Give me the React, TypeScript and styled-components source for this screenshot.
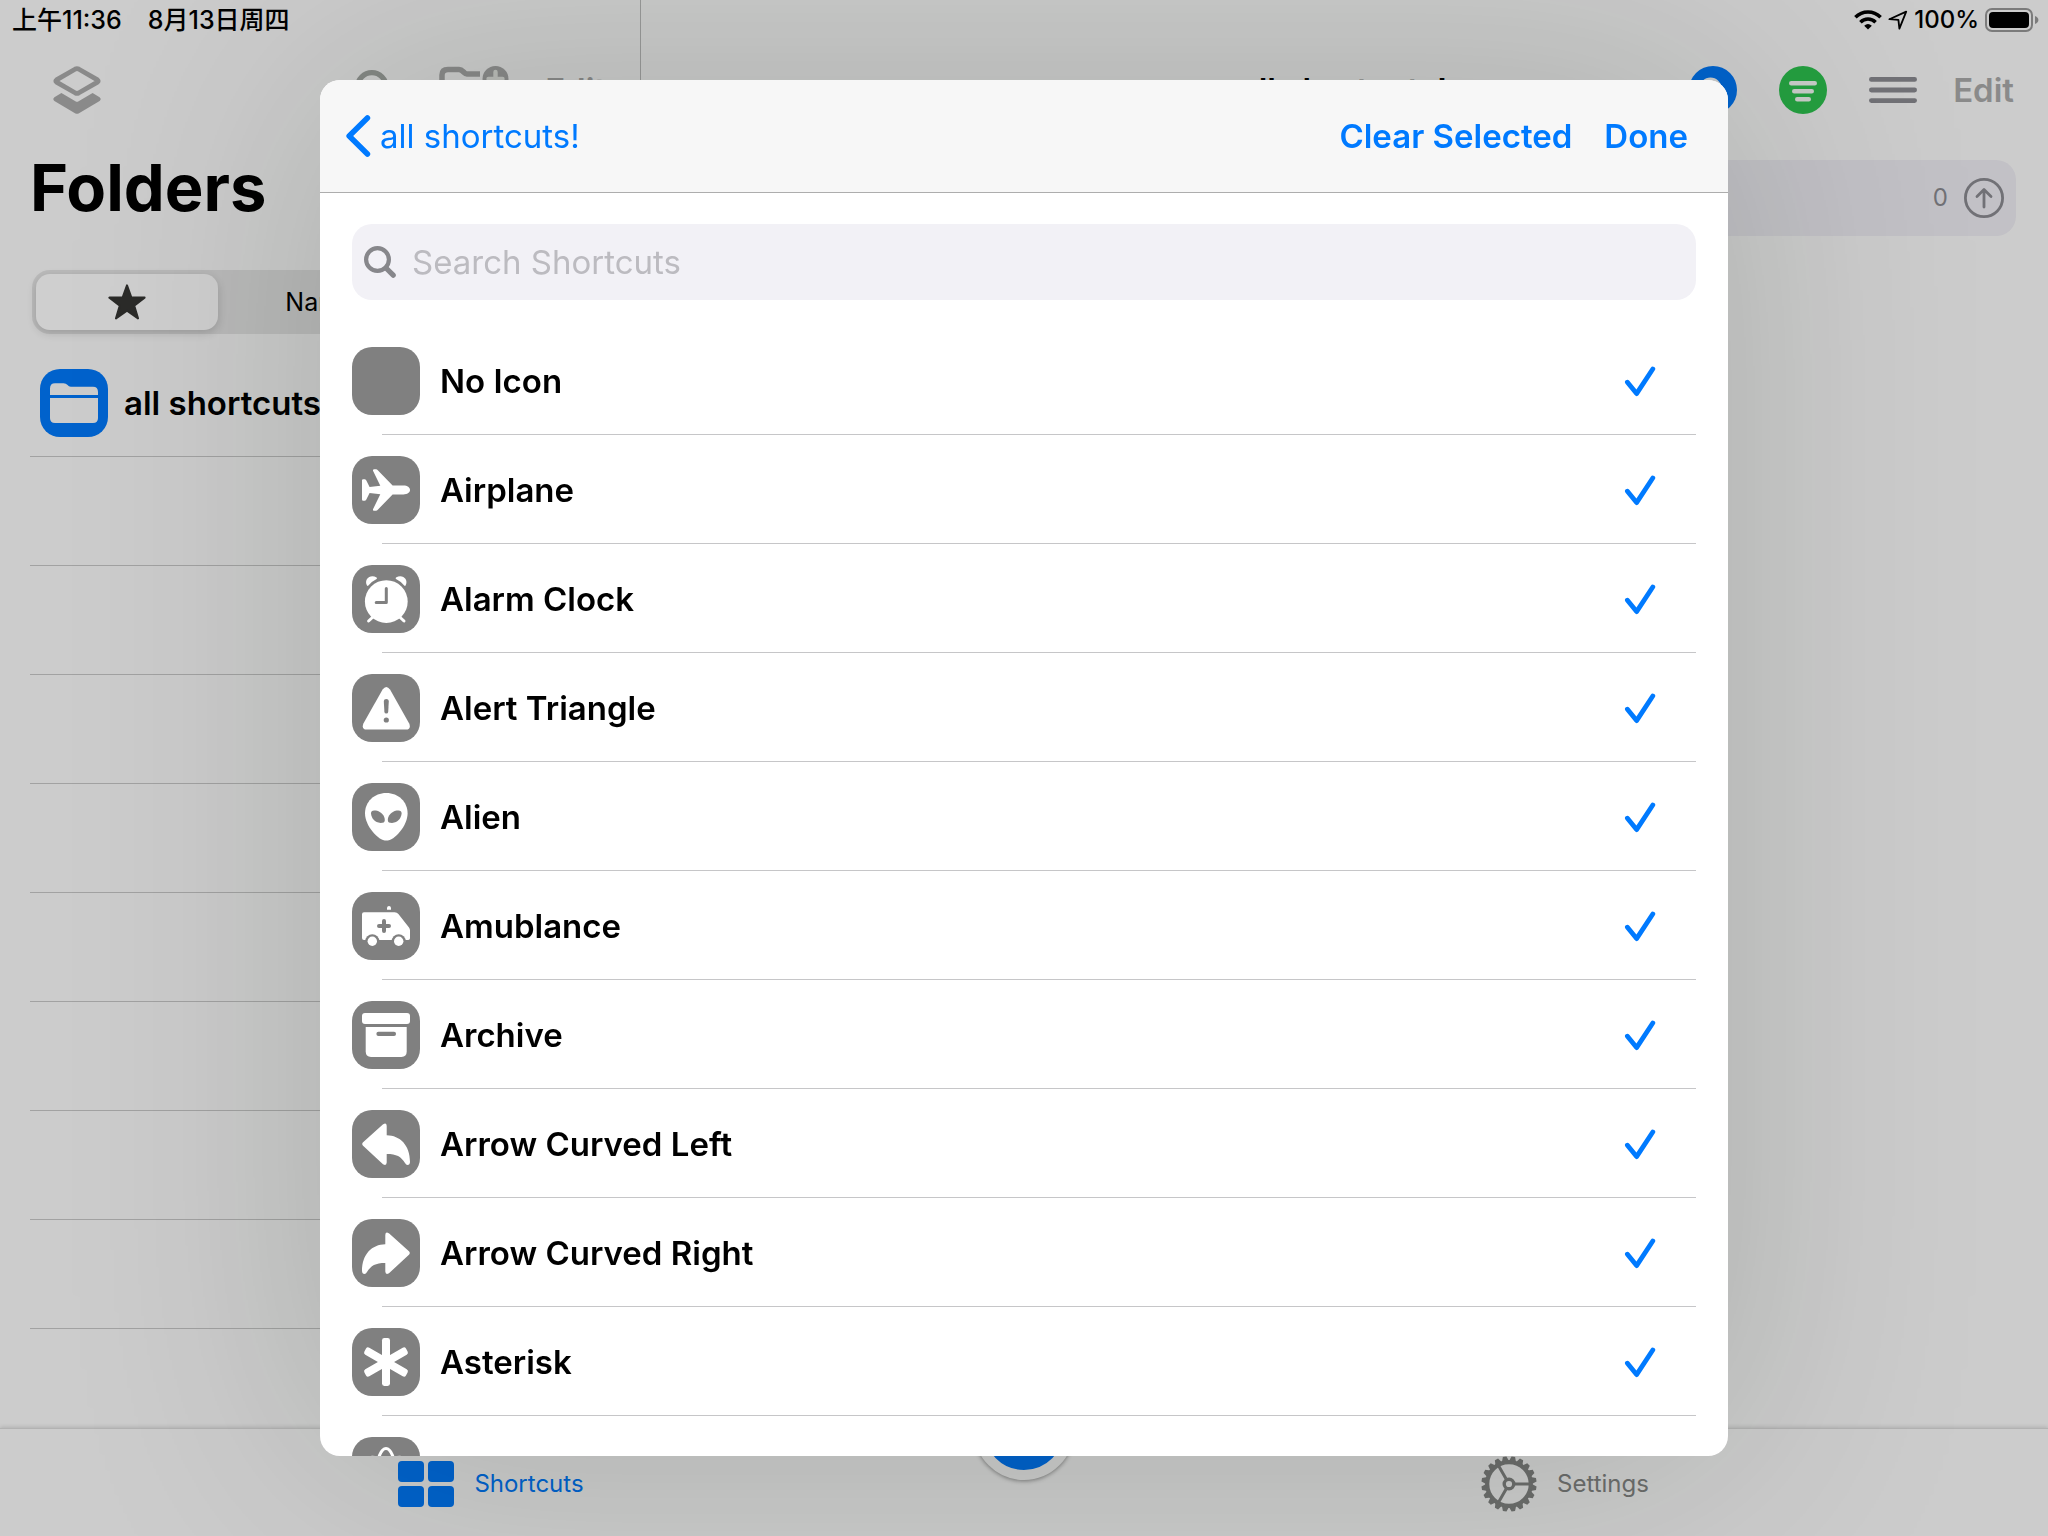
import React, { useState } from "react";
import styled, { createGlobalStyle, css } from "styled-components";

const GlobalStyle = createGlobalStyle`
  *, *::before, *::after { box-sizing: border-box; }
  body {
    margin: 0;
    background: #cccccc;
    color: #000;
    font-family: Inter, "Noto Sans CJK SC", "Liberation Sans", sans-serif;
    font-size: 33px;
    line-height: 40px;
  }
  h1, h2, ul { margin: 0; padding: 0; font-size: inherit; font-weight: inherit; }
  button, input { font: inherit; color: inherit; }
  svg { display: block; flex: none; }
`;

const BLUE = "#007aff";
const DIM_BLUE = "#0062cc";
const TILE_GRAY = "#808080";

/* ---------- page frame ---------- */

const Screen = styled.div`
  display: flex;
  flex-direction: column;
  height: 100vh;
  overflow: hidden;
  background: #cccccc;
`;

const Panes = styled.div`
  display: flex;
  flex: 1;
  min-height: 0;
`;

const Sidebar = styled.aside`
  flex: 0 0 641px;
  display: flex;
  flex-direction: column;
  border-right: 1px solid #9a9a9a;
`;

const MainPane = styled.main`
  flex: 1;
  min-width: 0;
`;

const StatusStrip = styled.div<{ $end?: boolean }>`
  display: flex;
  align-items: center;
  justify-content: ${(p) => (p.$end ? "flex-end" : "flex-start")};
  gap: ${(p) => (p.$end ? "6px" : "26px")};
  height: 40px;
  padding: 0 9px 0 12px;
  font-size: ${(p) => (p.$end ? "24px" : "25px")};
  line-height: 40px;
  font-weight: 500;
  white-space: nowrap;
`;

const IconButton = styled.button<{ $spaced?: boolean }>`
  display: flex;
  padding: 0;
  margin-right: ${(p) => (p.$spaced ? "8px" : "0")};
  border: 0;
  background: none;
  color: #8a8a8a;
`;

const TextButton = styled.button<{ $tone?: "blue" | "gray"; $regular?: boolean }>`
  display: flex;
  align-items: center;
  gap: 8px;
  padding: 0;
  border: 0;
  background: none;
  white-space: nowrap;
  font-weight: ${(p) => (p.$regular ? 400 : 600)};
  color: ${(p) => (p.$tone === "gray" ? "#8a8a8a" : BLUE)};
`;

const SidebarToolbar = styled.div`
  display: flex;
  align-items: center;
  gap: 36px;
  height: 100px;
  padding: 0 34px 0 53px;
`;

const Spacer = styled.span`
  flex: 1;
`;

const FoldersTitle = styled.h1`
  margin-top: 8px;
  padding-left: 30px;
  font-size: 65px;
  line-height: 80px;
  font-weight: 700;
`;

const Segments = styled.div`
  display: grid;
  grid-template-columns: 182px 204px 1fr;
  height: 64px;
  margin: 42px 32px 14px;
  padding: 4px;
  border-radius: 18px;
  background: #bababa;
`;

const Segment = styled.button<{ $active?: boolean }>`
  display: flex;
  align-items: center;
  justify-content: center;
  padding: 0;
  border: 0;
  border-radius: 14px;
  background: none;
  font-size: 25px;
  color: #000;
  ${(p) =>
    p.$active &&
    css`
      background: #cfcfcf;
      box-shadow: 0 3px 10px rgba(0, 0, 0, 0.16);
    `}
`;

const PlainList = styled.ul<{ $inset?: boolean }>`
  list-style: none;
  padding-left: ${(p) => (p.$inset ? "30px" : "0")};
`;

const FolderRow = styled.li`
  height: 109px;
  border-bottom: 1px solid #a2a2a2;
`;

const FolderLink = styled.a`
  display: flex;
  align-items: center;
  gap: 16px;
  height: 108px;
  padding: 2px 0 0 10px;
  color: #000;
  font-weight: 600;
  text-decoration: none;
  white-space: nowrap;
`;

const Tile = styled.span<{ $color: string }>`
  flex: none;
  display: block;
  width: 68px;
  height: 68px;
  border-radius: 20px;
  background: ${(p) => p.$color};
  color: ${(p) => p.$color};
`;

const MainToolbar = styled.div`
  display: grid;
  grid-template-columns: 1fr auto 1fr;
  align-items: center;
  height: 100px;
  padding: 0 34px 0 32px;
`;

const MainTitle = styled.h2`
  grid-column: 2;
  font-weight: 600;
`;

const ToolGroup = styled.div<{ $gap: number }>`
  display: flex;
  align-items: center;
  justify-content: flex-end;
  gap: ${(p) => p.$gap}px;
`;

const SearchField = styled.div<{ $dim?: boolean }>`
  display: flex;
  align-items: center;
  gap: 16px;
  height: 76px;
  border-radius: 20px;
  padding: 0 12px;
  margin: ${(p) => (p.$dim ? "20px 32px 0" : "0 0 26px")};
  background: ${(p) => (p.$dim ? "#c2c1c6" : "#f2f1f6")};
`;

const SearchInput = styled.input`
  flex: 1;
  min-width: 0;
  height: 76px;
  padding: 0;
  border: 0;
  outline: 0;
  background: none;
  &::placeholder {
    color: #bcbbc0;
    opacity: 1;
  }
`;

const ResultCount = styled.span`
  font-size: 24px;
  color: #717176;
`;

/* ---------- tab bar ---------- */

const TabBar = styled.nav`
  position: relative;
  display: grid;
  grid-template-columns: 1fr 84px 1fr;
  height: 108px;
  border-top: 1px solid #b2b2b2;
  background: #cccccc;
  box-shadow: 0 -1px 4px rgba(0, 0, 0, 0.14);
`;

const Tab = styled.a<{ $active?: boolean }>`
  display: flex;
  align-items: center;
  justify-content: center;
  gap: 20px;
  padding: 2px 0 0 ${(p) => (p.$active ? "0" : "16px")};
  font-size: 24px;
  color: ${(p) => (p.$active ? DIM_BLUE : "#6c6d6c")};
  text-decoration: none;
`;

const RunButton = styled.button`
  position: absolute;
  left: 50%;
  top: -49px;
  width: 100px;
  height: 100px;
  margin-left: -50px;
  border: 10px solid #cccccc;
  border-radius: 50%;
  padding: 0;
  background: ${DIM_BLUE};
  box-shadow: 0 1px 4px rgba(0, 0, 0, 0.4);
`;

/* ---------- sheet ---------- */

const SheetLayer = styled.div`
  position: fixed;
  inset: 0;
  display: flex;
  align-items: stretch;
  justify-content: center;
  padding: 80px;
`;

const Sheet = styled.section`
  display: flex;
  flex-direction: column;
  width: 100%;
  max-width: 1408px;
  overflow: hidden;
  border-radius: 20px;
  background: #fff;
  box-shadow: 0 0 260px rgba(0, 26, 4, 0.17);
`;

const SheetHeader = styled.header`
  flex: none;
  display: flex;
  align-items: center;
  gap: 32px;
  height: 113px;
  padding: 0 40px 0 26px;
  border-bottom: 1px solid #adadad;
  background: #f7f7f7;
`;

const SheetBody = styled.div`
  flex: 1;
  min-height: 0;
  overflow-y: auto;
  scrollbar-width: none;
  padding: 31px 32px 0;
`;

const ChoiceRow = styled.li`
  &::after {
    content: "";
    display: block;
    height: 1px;
    margin-left: 30px;
    background: #c6c6c8;
  }
`;

const ChoiceLabel = styled.label`
  display: flex;
  align-items: center;
  gap: 20px;
  height: 108px;
  padding: 2px 40px 0 0;
  font-weight: 600;
`;

const ChoiceName = styled.span`
  flex: 1;
`;

const CheckCell = styled.span`
  display: grid;
  width: 32px;
  height: 32px;
  > * {
    grid-area: 1 / 1;
  }
  > svg {
    pointer-events: none;
  }
  > input:not(:checked) + svg {
    visibility: hidden;
  }
`;

const Checkbox = styled.input`
  appearance: none;
  width: 32px;
  height: 32px;
  margin: 0;
`;

/* ---------- drawings ---------- */

const Magnifier = ({ color = "#87878b", size = 32 }: { color?: string; size?: number }) => (
  <svg width={size} height={size} viewBox="0 0 32 32" fill="none" stroke={color} strokeLinecap="round">
    <circle cx="13.5" cy="13.5" r="11.4" strokeWidth="4.2" />
    <path d="M22 22L29.2 29.2" strokeWidth="5.2" />
  </svg>
);

const Layers = () => (
  <svg width="48" height="48" viewBox="0 0 48 48">
    <path d="M22.4 3L3.6 13.8Q2 15 3.6 16.2L22.4 27Q24 27.8 25.6 27L44.4 16.2Q46 15 44.4 13.8L25.6 3Q24 2.2 22.4 3Z" fill="none" stroke="currentColor" strokeWidth="4.8" />
    <path d="M8.4 26.9L22.4 35.2Q24 36.2 25.6 35.2L39.6 26.9L46.6 31.2Q48.8 33 46.6 35L26 47.3Q24 48.4 22 47.3L1.4 35Q-0.8 33 1.4 31.2Z" fill="currentColor" />
  </svg>
);

const FolderPlus = () => (
  <svg width="70" height="48" viewBox="0 0 70 48" fill="none">
    <path d="M41 8H28C25 8 24 3.5 20 3.5H9Q3 3.5 3 9V38Q3 44 9 44H52Q57 44 57 39V30" stroke="currentColor" strokeWidth="5.5" />
    <circle cx="56.5" cy="13" r="13" fill="currentColor" />
    <path d="M56.5 6V20M49.5 13H63.5" stroke="#bcbeba" strokeWidth="4.4" strokeLinecap="round" />
  </svg>
);

const Star = () => (
  <svg width="38" height="36" viewBox="0 0 38 36" fill="#2b2b29" stroke="#2b2b29" strokeWidth="2" strokeLinejoin="round">
    <path d="M19 1.4L23.4 13.6H36.6L26.2 21.6L30 34.4L19 26.8L8 34.4L11.8 21.6L1.4 13.6H14.6Z" />
  </svg>
);

const FolderGlyph = () => (
  <svg width="68" height="68" viewBox="0 0 68 68" fill="#cccccc">
    <path d="M10 26V19.5Q10 14.3 15 14.3H23.5Q26 14.3 27.6 16L28.6 17Q29.4 17.8 31 17.8H53Q58 17.8 58 23V26Z" />
    <path d="M10 29H58V49Q58 54 53 54H15Q10 54 10 49Z" />
  </svg>
);

const Wifi = () => (
  <svg width="28" height="20" viewBox="0 0 28 20" fill="none" stroke="#000" strokeWidth="3.6">
    <path d="M1.4 7.2C8.5 0.2 19.5 0.2 26.6 7.2" />
    <path d="M6.4 12.2C10.8 8 17.2 8 21.6 12.2" />
    <path d="M14 19.6L10.2 15.8Q14 12.4 17.8 15.8Z" fill="#000" stroke="none" />
  </svg>
);

const Location = () => (
  <svg width="20" height="20" viewBox="0 0 20 20" fill="none" stroke="#000" strokeWidth="1.8" strokeLinejoin="round">
    <path d="M1.4 9.2L18.2 1.6L11.4 18.6L10.4 9.8Z" />
  </svg>
);

const Battery = () => (
  <svg width="54" height="24" viewBox="0 0 54 24">
    <rect x="1" y="1" width="46" height="22" rx="6" fill="none" stroke="#7b7b7b" strokeWidth="2" />
    <rect x="4" y="4" width="40" height="16" rx="4" fill="#000" />
    <path d="M50 8Q53.4 9.6 53.4 12T50 16Z" fill="#7b7b7b" />
  </svg>
);

const InfoDisc = () => (
  <svg width="48" height="48" viewBox="0 0 48 48">
    <circle cx="24" cy="24" r="24" fill={DIM_BLUE} />
    <circle cx="21.5" cy="22.5" r="9" fill="none" stroke="#cccccc" strokeWidth="4" />
    <path d="M28 29L35 36" stroke="#cccccc" strokeWidth="4" strokeLinecap="round" />
  </svg>
);

const SortDisc = () => (
  <svg width="48" height="48" viewBox="0 0 48 48">
    <circle cx="24" cy="24" r="24" fill="#249f40" />
    <path d="M12.2 17.2H35.8M15.2 25.2H32.8M18.2 33.2H29.8" stroke="#c8ccc8" strokeWidth="4.4" strokeLinecap="round" />
  </svg>
);

const Bars = () => (
  <svg width="48" height="28" viewBox="0 0 48 28">
    <path d="M2.4 3.4H45.6M2.4 14H45.6M2.4 24.6H45.6" stroke="#717176" strokeWidth="4.8" strokeLinecap="round" />
  </svg>
);

const ArrowUpCircle = () => (
  <svg width="40" height="40" viewBox="0 0 40 40" fill="none" stroke="#717176" strokeWidth="2.8" strokeLinecap="round" strokeLinejoin="round">
    <circle cx="20" cy="20" r="18.6" />
    <path d="M20 29V12M13 18.4L20 11.6L27 18.4" />
  </svg>
);

const Chevron = () => (
  <svg width="26" height="42" viewBox="0 0 26 42" fill="none" stroke={BLUE} strokeWidth="5.6" strokeLinecap="round" strokeLinejoin="round">
    <path d="M21.4 3L3.2 21L21.4 39" />
  </svg>
);

const CheckMark = () => (
  <svg width="32" height="32" viewBox="0 0 32 32" fill="none" stroke={BLUE} strokeWidth="4.8" strokeLinecap="round" strokeLinejoin="round">
    <path d="M3.4 17.2L12.6 28.6L28.8 4" />
  </svg>
);

const GridGlyph = () => (
  <svg width="56" height="46" viewBox="0 0 56 46" fill="currentColor">
    <rect width="26" height="21" rx="4" />
    <rect x="30" width="26" height="21" rx="4" />
    <rect y="25" width="26" height="21" rx="4" />
    <rect x="30" y="25" width="26" height="21" rx="4" />
  </svg>
);

const Gear = () => (
  <svg width="56" height="56" viewBox="-28 -28 56 56" fill="none" stroke="currentColor">
    <circle r="21.8" strokeWidth="4.2" />
    {Array.from({ length: 20 }, (_, i) => (
      <path key={i} d="M-3.6 -22.6L-1.8 -27.6H1.8L3.6 -22.6Z" fill="currentColor" stroke="none" transform={`rotate(${i * 18 + 9})`} />
    ))}
    <circle r="4.8" strokeWidth="3.4" />
    <path d="M6 0H20.6M-3 -5.2L-10.3 -17.9M-3 5.2L-10.3 17.9" strokeWidth="3" />
  </svg>
);

const curvedArrow =
  "M10.8 32.6L30.8 14.6Q34.7 11.8 34.7 16V25.2C48 25.4 58 35 58 52Q57.8 54.9 55.6 55Q54 55 53 53C49 46.6 44.6 44 34.7 44V52.6Q34.4 56.4 31 54.2L10.8 35.6Q9.4 34 10.8 32.6Z";

const glyphs: Record<string, React.ReactNode> = {
  airplane: (
    <path d="M10 24.4Q10 23.2 11.2 23.2H12.6Q13.6 23.2 14.2 24.2L17.6 31L28.3 29.8L21 14.8Q20.6 13.2 22 13.2H24Q25 13.2 25.8 14.2L40.6 29.6H51.4C55.4 29.6 58 31.6 58 34C58 36.4 55.4 38.4 51.4 38.4H40.6L25.8 53.8Q25 54.8 24 54.8H22Q20.6 54.8 21 53.2L28.3 38.2L17.6 37L14.2 43.8Q13.6 44.8 12.6 44.8H11.2Q10 44.8 10 43.6Z" />
  ),
  alarm: (
    <>
      <circle cx="34.3" cy="36.6" r="21.4" />
      <path d="M15 20.6C11.6 14.4 18.4 8.6 24.6 12.6Q25.4 13.4 24.6 14Q19.6 16.4 16.4 20.6Q15.6 21.4 15 20.6Z" />
      <path d="M53.6 20.6C57 14.4 50.2 8.6 44 12.6Q43.2 13.4 44 14Q49 16.4 52.2 20.6Q53 21.4 53.6 20.6Z" />
      <path d="M16.6 56L22 51M52 56L46.6 51" stroke="#fff" strokeWidth="3" strokeLinecap="round" />
      <path d="M34.3 23.4V37.6H24.2" fill="none" stroke="currentColor" strokeWidth="3" strokeLinecap="round" strokeLinejoin="round" />
    </>
  ),
  alert: (
    <>
      <path d="M30.6 15.6Q34.3 10.6 38 15.6L57.2 49.4Q59.4 55.4 54 55.6H14.6Q9.2 55.4 11.4 49.4Z" />
      <path d="M31.8 27Q32 25 34.3 25T36.8 27L36.2 38Q36 39.6 34.3 39.6T32.4 38Z" fill="currentColor" />
      <circle cx="34.3" cy="46" r="2.6" fill="currentColor" />
    </>
  ),
  alien: (
    <>
      <path d="M34.3 10C46.6 10 55.6 19 55.6 30.4C55.6 42.4 42.6 57.6 34.3 57.6S13 42.4 13 30.4C13 19 22 10 34.3 10Z" />
      <path d="M19 30.6C18.8 27.6 21 27 24 27.6C29.6 28.8 32.8 33 32.8 37C32.8 39.4 31.2 40 28.6 40C22.6 39.6 19.4 35.2 19 30.6Z" fill="currentColor" />
      <path d="M49.6 30.6C49.8 27.6 47.6 27 44.6 27.6C39 28.8 35.8 33 35.8 37C35.8 39.4 37.4 40 40 40C46 39.6 49.2 35.2 49.6 30.6Z" fill="currentColor" />
    </>
  ),
  ambulance: (
    <>
      <path d="M35 17.8V16Q35.2 14 37 14T39 16V17.8Z" />
      <path d="M12 20.2H42.6Q45 20.2 46.4 22L57 35.4Q58 36.8 58 38.4V46.2Q58 48 56.2 48H12Q10 48 10 46V22.2Q10 20.2 12 20.2Z" />
      <circle cx="20.3" cy="49.2" r="7" fill="currentColor" />
      <circle cx="46.7" cy="49.2" r="7" fill="currentColor" />
      <circle cx="20.3" cy="49.2" r="4.7" />
      <circle cx="46.7" cy="49.2" r="4.7" />
      <path d="M32 29V39M27 34H37" stroke="currentColor" strokeWidth="4" strokeLinecap="round" />
    </>
  ),
  archive: (
    <>
      <rect x="10" y="12" width="48" height="11" rx="3" />
      <path d="M13.7 26H54.7V50.6Q54.7 56 49.4 56H19Q13.7 56 13.7 50.6Z" />
      <rect x="24.4" y="30.8" width="19.6" height="4.2" rx="2" fill="currentColor" />
    </>
  ),
  arrowLeft: <path d={curvedArrow} />,
  arrowRight: <path d={curvedArrow} transform="matrix(-1 0 0 1 68 0)" />,
  asterisk: (
    <>
      {[0, 60, 120].map((a) => (
        <rect key={a} x="30" y="10" width="8" height="48" rx="2.4" transform={`rotate(${a} 34 34)`} />
      ))}
    </>
  ),
  atom: (
    <g fill="none" stroke="#fff" strokeWidth="3">
      {[0, 60, 120].map((a) => (
        <ellipse key={a} cx="34" cy="34" rx="9" ry="22.4" transform={`rotate(${a} 34 34)`} />
      ))}
    </g>
  ),
};

const choices = [
  { name: "No Icon", glyph: "" },
  { name: "Airplane", glyph: "airplane" },
  { name: "Alarm Clock", glyph: "alarm" },
  { name: "Alert Triangle", glyph: "alert" },
  { name: "Alien", glyph: "alien" },
  { name: "Amublance", glyph: "ambulance" },
  { name: "Archive", glyph: "archive" },
  { name: "Arrow Curved Left", glyph: "arrowLeft" },
  { name: "Arrow Curved Right", glyph: "arrowRight" },
  { name: "Asterisk", glyph: "asterisk" },
  { name: "", glyph: "atom" },
];

function Choice({ name, glyph }: { name: string; glyph: string }) {
  const [checked, setChecked] = useState(true);
  return (
    <ChoiceRow>
      <ChoiceLabel>
        <Tile $color={TILE_GRAY}>
          {glyph && (
            <svg width="68" height="68" viewBox="0 0 68 68" fill="#fff">
              {glyphs[glyph]}
            </svg>
          )}
        </Tile>
        <ChoiceName>{name}</ChoiceName>
        <CheckCell>
          <Checkbox
            type="checkbox"
            aria-label={name || glyph}
            checked={checked}
            onChange={(e) => setChecked(e.target.checked)}
          />
          <CheckMark />
        </CheckCell>
      </ChoiceLabel>
    </ChoiceRow>
  );
}

export default function App() {
  return (
    <>
      <GlobalStyle />
      <Screen>
        <Panes>
          <Sidebar>
            <StatusStrip>
              <span>上午11:36</span>
              <span>8月13日周四</span>
            </StatusStrip>
            <SidebarToolbar>
              <IconButton aria-label="Layers"><Layers /></IconButton>
              <Spacer />
              <IconButton $spaced aria-label="Search"><Magnifier color="#858885" size={40} /></IconButton>
              <IconButton aria-label="New folder"><FolderPlus /></IconButton>
              <TextButton $tone="gray">Edit</TextButton>
            </SidebarToolbar>
            <FoldersTitle>Folders</FoldersTitle>
            <Segments>
              <Segment $active aria-label="Favorites"><Star /></Segment>
              <Segment>Name</Segment>
            </Segments>
            <PlainList $inset>
              <FolderRow>
                <FolderLink href="#all">
                  <Tile $color={DIM_BLUE}><FolderGlyph /></Tile>
                  all shortcuts!
                </FolderLink>
              </FolderRow>
              {Array.from({ length: 8 }, (_, i) => (
                <FolderRow key={i} />
              ))}
            </PlainList>
          </Sidebar>
          <MainPane>
            <StatusStrip $end>
              <Wifi />
              <Location />
              <span>100%</span>
              <Battery />
            </StatusStrip>
            <MainToolbar>
              <MainTitle>all shortcuts!</MainTitle>
              <ToolGroup $gap={36}>
                <ToolGroup $gap={42}>
                  <IconButton aria-label="Find"><InfoDisc /></IconButton>
                  <IconButton aria-label="Sort"><SortDisc /></IconButton>
                  <IconButton aria-label="Menu"><Bars /></IconButton>
                </ToolGroup>
                <TextButton $tone="gray">Edit</TextButton>
              </ToolGroup>
            </MainToolbar>
            <SearchField $dim>
              <SearchInput aria-label="Filter" />
              <ResultCount>0</ResultCount>
              <IconButton aria-label="Ascending"><ArrowUpCircle /></IconButton>
            </SearchField>
          </MainPane>
        </Panes>
        <TabBar>
          <Tab $active href="#shortcuts"><GridGlyph />Shortcuts</Tab>
          <span />
          <Tab href="#settings"><Gear />Settings</Tab>
          <RunButton aria-label="Run" />
        </TabBar>
      </Screen>
      <SheetLayer>
        <Sheet role="dialog" aria-label="Choose shortcuts">
          <SheetHeader>
            <TextButton $regular><Chevron />all shortcuts!</TextButton>
            <Spacer />
            <TextButton>Clear Selected</TextButton>
            <TextButton>Done</TextButton>
          </SheetHeader>
          <SheetBody>
            <SearchField>
              <Magnifier />
              <SearchInput type="text" placeholder="Search Shortcuts" aria-label="Search Shortcuts" />
            </SearchField>
            <PlainList>
              {choices.map((c) => (
                <Choice key={c.glyph} {...c} />
              ))}
            </PlainList>
          </SheetBody>
        </Sheet>
      </SheetLayer>
    </>
  );
}
